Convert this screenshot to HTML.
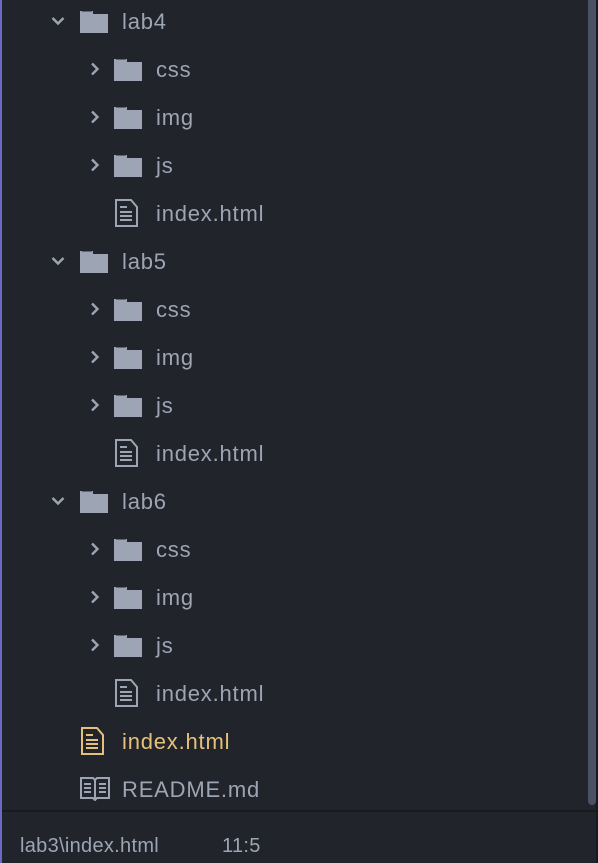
<!DOCTYPE html>
<html><head><meta charset="utf-8"><style>
body{margin:0;width:598px;height:863px;background:#21252b;position:relative;overflow:hidden;font-family:"Liberation Sans",sans-serif;}
.lb{position:absolute;left:0;top:0;width:2px;height:863px;background:#6b68c8;}
.sb{position:absolute;left:588px;top:0;width:8px;height:805px;background:#4b5263;border-radius:0 0 4px 4px;}
.rb{position:absolute;left:596px;top:0;width:2px;height:863px;background:#181a1f;}
.div{position:absolute;left:2px;top:810px;width:594px;height:2px;background:#181a1f;}
.t{position:absolute;font-size:22px;letter-spacing:0.8px;color:#9da5b4;line-height:26px;white-space:nowrap;}
svg{position:absolute;}
</style></head><body>
<div class="lb"></div><div class="sb"></div><div class="rb"></div><div class="div"></div>
<div id="c"></div>
<div class="t" style="left:20px;top:833px;font-size:20px;letter-spacing:0.3px;">lab3\index.html</div>
<div class="t" style="left:222px;top:833px;font-size:20px;letter-spacing:0.3px;">11:5</div>
<script>
var c=document.getElementById('c'),h='';
function folder(x,y){return '<svg style="left:'+x+'px;top:'+(y-12)+'px" width="28" height="24"><path d="M0 2h13v3h15v19H0z" fill="#9da5b4"/><rect x="2" y="1" width="10" height="1.5" fill="#21252b"/></svg>';}
function chevD(x,y){return '<svg style="left:'+x+'px;top:'+(y-5)+'px" width="14" height="10"><path d="M1.5 2L7 7.5 12.5 2" stroke="#9da5b4" stroke-width="2.4" fill="none"/></svg>';}
function chevR(x,y){return '<svg style="left:'+x+'px;top:'+(y-7)+'px" width="10" height="14"><path d="M2 1.5L7.5 7 2 12.5" stroke="#9da5b4" stroke-width="2.4" fill="none"/></svg>';}
function file(x,y,col){return '<svg style="left:'+x+'px;top:'+(y-14)+'px" width="24" height="28"><path d="M1 1h15l6 7v19H1z" stroke="'+col+'" stroke-width="2" fill="none"/><path d="M5 8h7M5 13h12M5 17h12M5 21h12" stroke="'+col+'" stroke-width="2"/></svg>';}
function text(x,y,s,col){return '<div class="t" style="left:'+x+'px;top:'+(y-12)+'px;color:'+col+'">'+s+'</div>';}
var g='#9da5b4';
['lab4','lab5','lab6'].forEach(function(n,i){
 var y=21+i*240;
 h+=chevD(51,y)+folder(80,y)+text(122,y,n,g);
 ['css','img','js'].forEach(function(s,j){var yy=y+48*(j+1);h+=chevR(90,yy)+folder(114,yy)+text(156,yy,s,g);});
 var yy=y+192;h+=file(115,yy,g)+text(156,yy,'index.html',g);
});
h+=file(81,741,'#e5c07b')+text(122,741,'index.html','#e5c07b');
h+='<svg style="left:80px;top:777px" width="30" height="24"><path d="M1 1h12l2 2 2-2h12v20H17l-2 2-2-2H1z" stroke="#9da5b4" stroke-width="2" fill="none"/><path d="M15 3v19M4 7h7M4 11h7M4 15h7M19 7h7M19 11h7M19 15h7" stroke="#9da5b4" stroke-width="2"/></svg>';
h+=text(122,789,'README.md',g);
c.innerHTML=h;
</script>
</body></html>
